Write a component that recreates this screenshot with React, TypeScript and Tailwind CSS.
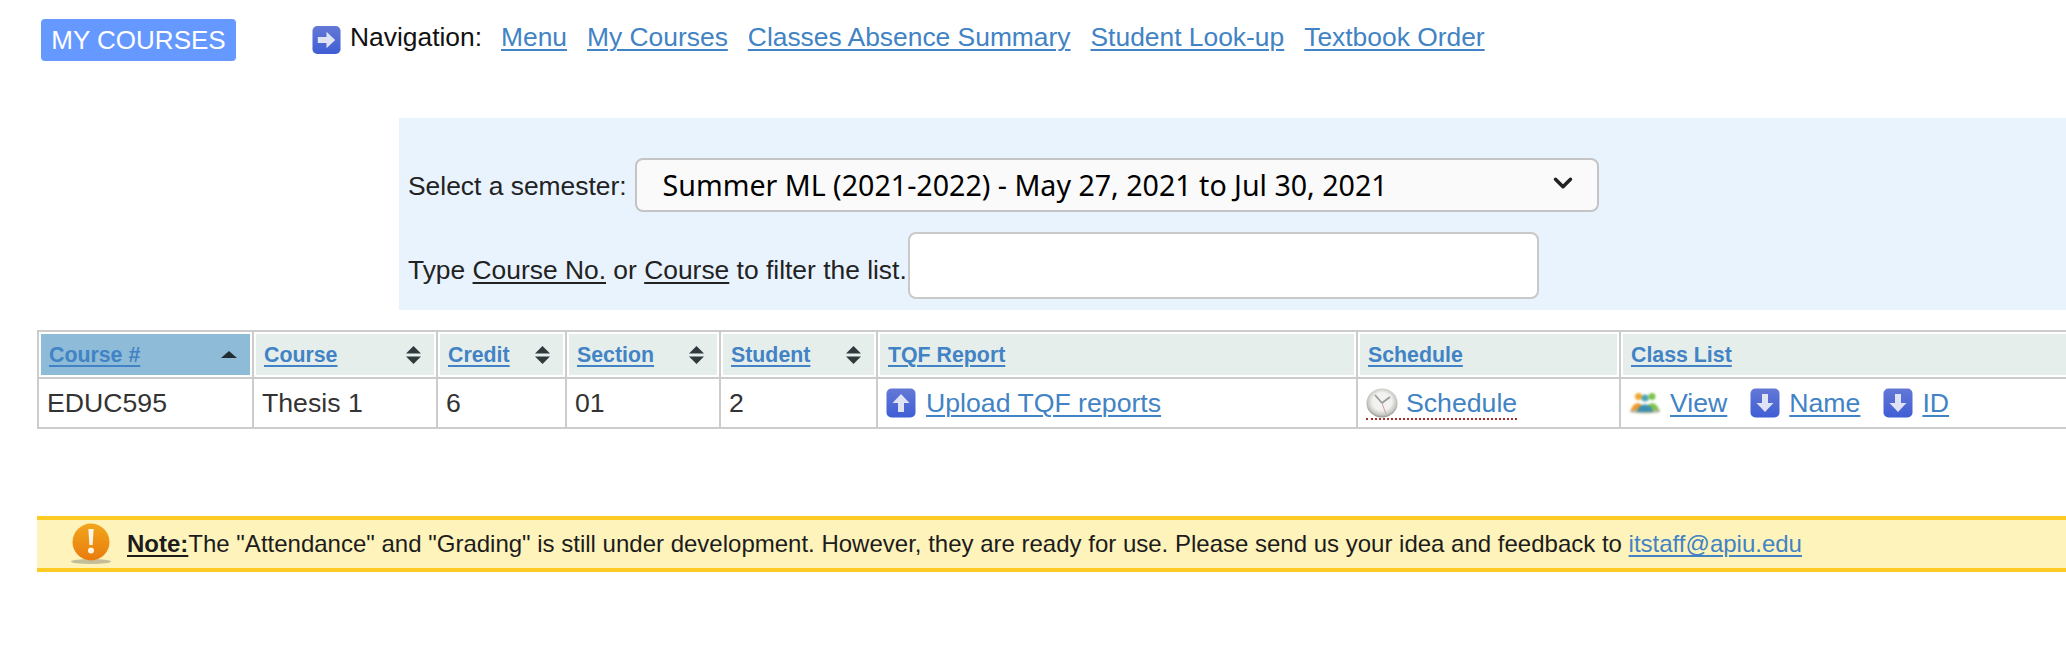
import { ChevronDown } from "lucide-react"

const sans = "font-['Liberation_Sans',Arial,sans-serif]"
const linkCls = "text-[#4183c4] underline decoration-2 underline-offset-[3px]"

function ArrowIcon({ dir, className }: { dir: "up" | "down" | "right"; className: string }) {
  const rot = dir === "up" ? 0 : dir === "down" ? 180 : 90
  const id = `blue-${dir}`
  return (
    <svg viewBox="0 0 30 30" className={`blur-[0.6px] shrink-0 ${className}`}>
      <defs>
        <linearGradient id={id} x1="0" y1="0" x2="0" y2="1">
          <stop offset="0" stopColor="#6478d6" />
          <stop offset="1" stopColor="#3f5ed4" />
        </linearGradient>
      </defs>
      <rect x="0.5" y="0.5" width="29" height="29" rx="5" fill={`url(#${id})`} />
      <path
        d="M15 6 L23.5 15 L18 15 L18 24 L12 24 L12 15 L6.5 15 Z"
        fill="#dfe3f3"
        transform={`rotate(${rot} 15 15)`}
      />
    </svg>
  )
}

function ClockIcon() {
  return (
    <svg viewBox="0 0 32 30" className="w-8 h-[30px] blur-[0.7px] shrink-0">
      <defs>
        <radialGradient id="clockface" cx="0.5" cy="0.45" r="0.55">
          <stop offset="0.55" stopColor="#f2f2f0" />
          <stop offset="0.85" stopColor="#c6c6c3" />
          <stop offset="1" stopColor="#8f8f8c" />
        </radialGradient>
      </defs>
      <ellipse cx="16" cy="15" rx="15.5" ry="14.5" fill="url(#clockface)" />
      <path d="M16 15 L9 7 M16 15 L24 9" stroke="#9a9a9a" strokeWidth="1.8" fill="none" />
      <path d="M16 15 L20 26" stroke="#d79a9a" strokeWidth="1" fill="none" />
    </svg>
  )
}

function GroupIcon() {
  return (
    <svg viewBox="0 0 32 22" className="w-8 h-[22px] blur-[0.9px] shrink-0">
      <ellipse cx="16" cy="19" rx="15.5" ry="2.5" fill="#b9b69c" />
      <circle cx="9.5" cy="4.5" r="3.5" fill="#f2a42e" />
      <path d="M2 18 C4 9 14 9 15 18 Z" fill="#ee9a2a" />
      <circle cx="23" cy="4.5" r="3.5" fill="#7dc24a" />
      <path d="M17 18 C18 9 28 9 30 18 Z" fill="#80c24c" />
      <circle cx="16" cy="6" r="3.5" fill="#4aa3b0" />
      <path d="M8 20 C9 10 23 10 24 20 Z" fill="#3d8fb0" />
    </svg>
  )
}

function WarnIcon() {
  return (
    <svg viewBox="0 0 42 42" className="w-[42px] h-[42px] shrink-0 blur-[0.4px]">
      <defs>
        <linearGradient id="warn" x1="0" y1="0" x2="0" y2="1">
          <stop offset="0" stopColor="#f2a51c" />
          <stop offset="1" stopColor="#e97c0d" />
        </linearGradient>
      </defs>
      <ellipse cx="21" cy="38.5" rx="20" ry="2.5" fill="#c4bd99" />
      <circle cx="21" cy="19" r="18.5" fill="url(#warn)" />
      <path d="M18.4 6 L23.6 6 L22.6 22 L19.4 22 Z" fill="#fdf6e6" />
      <circle cx="21" cy="27.5" r="3" fill="#fdf6e6" />
    </svg>
  )
}

function SortIcon({ active }: { active?: boolean }) {
  if (active) {
    return (
      <svg viewBox="0 0 16 7" className="w-4 h-[7px] shrink-0">
        <path d="M8 0 L16 7 L0 7 Z" fill="#222c33" />
      </svg>
    )
  }
  return (
    <svg viewBox="0 0 15 18" className="w-[15px] h-[18px] shrink-0">
      <path d="M7.5 0 L15 7.6 L0 7.6 Z" fill="#2f3a3d" />
      <path d="M7.5 18 L15 10.4 L0 10.4 Z" fill="#2f3a3d" />
    </svg>
  )
}

const columns = [
  { label: "Course #", width: "w-[215px]", sort: "active" },
  { label: "Course", width: "w-[184px]", sort: "both" },
  { label: "Credit", width: "w-[129px]", sort: "both" },
  { label: "Section", width: "w-[154px]", sort: "both" },
  { label: "Student", width: "w-[157px]", sort: "both" },
  { label: "TQF Report", width: "w-[480px]", sort: "" },
  { label: "Schedule", width: "w-[263px]", sort: "" },
  { label: "Class List", width: "w-[481px]", sort: "" },
]

const navLinks = ["Menu", "My Courses", "Classes Absence Summary", "Student Look-up", "Textbook Order"]

export default function App() {
  return (
    <div className={`${sans} w-[2066px] h-[650px] overflow-hidden bg-white text-[#222] text-[26.4px]`}>
      <div className="flex items-start pt-[19px] pl-[41px]">
        <div className="w-[195px] h-[42px] rounded bg-[#6699ff] text-white text-[26px] flex items-center justify-center">
          MY COURSES
        </div>
        <div className="flex items-center ml-[76px] mt-px h-[36px]">
          <ArrowIcon dir="right" className="w-[29px] h-[30px] mt-1" />
          <span className="ml-[9px] text-[#111]">Navigation:</span>
          <div className="flex gap-5 ml-[19px]">
            {navLinks.map((n) => (
              <a key={n} className={linkCls}>
                {n}
              </a>
            ))}
          </div>
        </div>
      </div>

      <div className="ml-[399px] mt-[57px] h-[192px] bg-[#e8f3fe] pt-10 pl-[9px]">
        <div className="flex items-center">
          <span className="pt-[3px]">Select a semester:</span>
          <div className="relative ml-2 w-[964px] h-[54px]">
            <select className="w-full h-full appearance-none rounded-lg border-2 border-[#c4c4c4] bg-[#fafafa] pl-[26px] pt-px text-[28.6px] text-black font-['Noto_Sans',sans-serif]">
              <option>Summer ML (2021-2022) - May 27, 2021 to Jul 30, 2021</option>
            </select>
            <ChevronDown
              className="absolute right-[21px] top-[10px] w-[30px] h-[30px] text-[#222] pointer-events-none"
              strokeWidth={2.8}
            />
          </div>
        </div>
        <div className="flex items-center mt-5">
          <span className="pt-[11px]">
            Type <span className="underline decoration-2 underline-offset-[3px]">Course No.</span> or{" "}
            <span className="underline decoration-2 underline-offset-[3px]">Course</span> to filter the list.
          </span>
          <input className="ml-px w-[631px] h-[67px] rounded-lg border-2 border-[#c9c9c9] bg-white" />
        </div>
      </div>

      <table className="ml-[37px] mt-5 w-[2063px] table-fixed border-collapse border-2 border-[#ccc] text-[26.67px] text-[#333]">
        <thead>
          <tr>
            {columns.map((c) => (
              <th key={c.label} className={`${c.width} border-2 border-[#ccc] p-0.5 font-bold text-left`}>
                <div
                  className={`h-[41px] flex items-center justify-between pl-2 pr-[13px] text-[21.33px] ${
                    c.sort === "active" ? "bg-[#8ebbd8]" : "bg-[#e6eeec]"
                  }`}
                >
                  <a className={`${linkCls} pt-0.5`}>{c.label}</a>
                  {c.sort && <SortIcon active={c.sort === "active"} />}
                </div>
              </th>
            ))}
          </tr>
        </thead>
        <tbody>
          <tr className="h-[50px]">
            <td className="border-2 border-[#ccc] px-2">EDUC595</td>
            <td className="border-2 border-[#ccc] px-2">Thesis 1</td>
            <td className="border-2 border-[#ccc] px-2">6</td>
            <td className="border-2 border-[#ccc] px-2">01</td>
            <td className="border-2 border-[#ccc] px-2">2</td>
            <td className="border-2 border-[#ccc] px-2">
              <div className="flex items-center gap-2.5">
                <ArrowIcon dir="up" className="w-[30px] h-[30px]" />
                <a className={linkCls}>Upload TQF reports</a>
              </div>
            </td>
            <td className="border-2 border-[#ccc] px-2">
              <div className="flex">
                <span className="flex items-center gap-2 border-b-2 border-dotted border-[#a52a2a] h-[34px] pt-px">
                  <ClockIcon />
                  <span className="text-[#4183c4]">Schedule</span>
                </span>
              </div>
            </td>
            <td className="border-2 border-[#ccc] px-2">
              <div className="flex items-center">
                <GroupIcon />
                <a className={`${linkCls} ml-[9px]`}>View</a>
                <ArrowIcon dir="down" className="w-[30px] h-[30px] ml-[23px]" />
                <a className={`${linkCls} ml-[9px]`}>Name</a>
                <ArrowIcon dir="down" className="w-[30px] h-[30px] ml-[23px]" />
                <a className={`${linkCls} ml-[9px]`}>ID</a>
              </div>
            </td>
          </tr>
        </tbody>
      </table>

      <div className="ml-[37px] mt-[87px] h-14 border-y-4 border-[#fdcb23] bg-[#fef3bb] flex items-center pl-[33px] text-[24px] text-[#1c1c1c]">
        <WarnIcon />
        <span className="ml-[15px]">
          <b className="underline decoration-2 underline-offset-[3px]">Note:</b>The "Attendance" and "Grading" is still under development. However, they are ready for use. Please send us your idea and feedback to{" "}
          <a className={linkCls}>itstaff@apiu.edu</a>
        </span>
      </div>
    </div>
  )
}
